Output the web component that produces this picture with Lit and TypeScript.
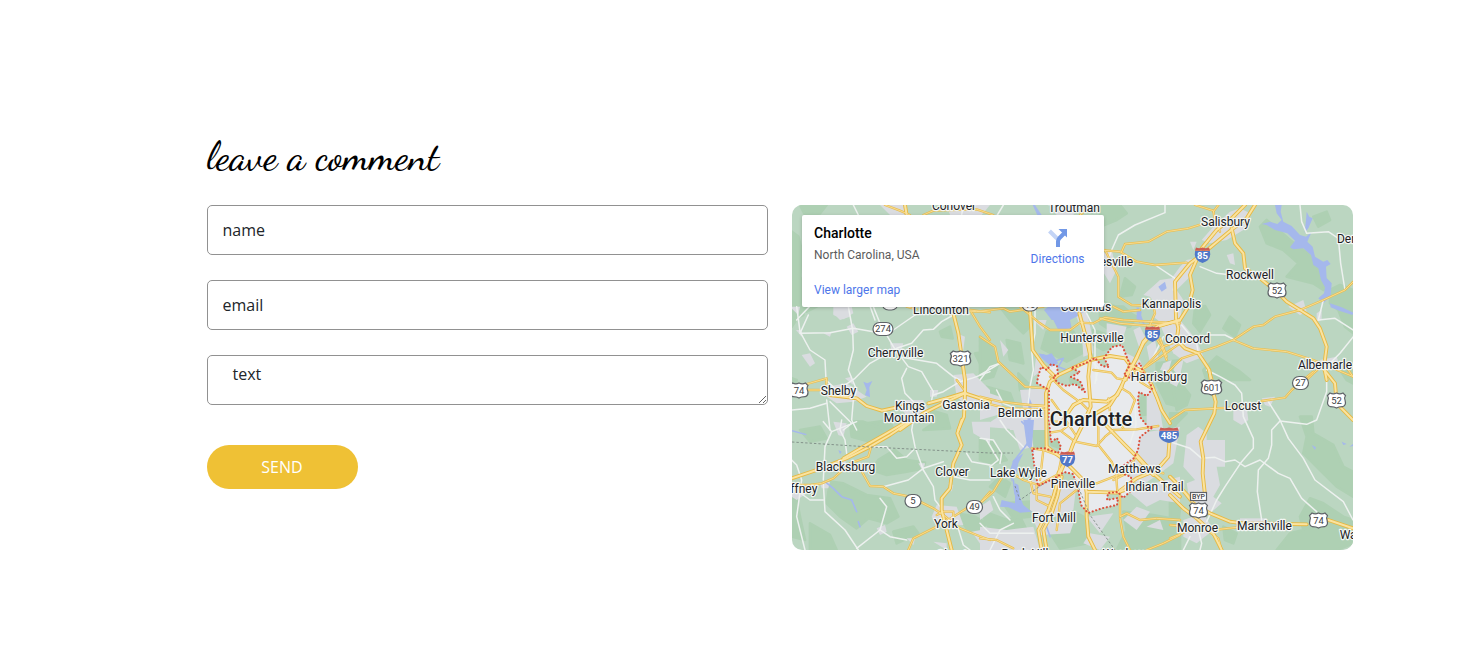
import { LitElement, html, svg, css } from "lit";
import { customElement } from "lit/decorators.js";

// Each survey sheet stores its geometry at three units per screen pixel.
interface Sheet {
  x: number;
  y: number;
  forest?: string[];
  urban?: string[];
  lake?: string[];
  river?: string[];
  local?: string[];
  road?: string[];
  highway?: string[];
}

const SHEETS: Sheet[] = [
  {
    x: 790, y: 200,
    forest: ["5,95 25,110 35,150 30,230 5,240", "30,15 110,15 90,40 45,45", "5,215 40,240 40,345 5,360"],
    urban: ["270,15 340,15 345,45 300,45", "140,318 185,318 180,350 150,360 130,340", "470,15 600,15 575,45 480,45", "0,320 30,320 25,345", "780,15 870,15 850,45 800,45"],
    lake: ["735,15 755,45 742,45 728,15", "775,320 850,320 845,345 825,360 785,360 762,330"],
    local: ["190,15 205,45", "240,318 255,360", "640,15 622,45", "60,318 20,360", "520,15 515,45"],
    road: ["285,15 330,32 360,45", "400,45 430,32 560,28 610,45", "870,45 905,15", "490,330 560,335 640,325 660,335 760,320"],
    highway: ["345,15 350,45"],
  },
  {
    x: 1100, y: 200,
    forest: [
      "480,80 500,60 530,85 570,120 610,150 650,180 655,215 690,250 670,270 640,250 560,230 595,190 550,150 500,130", "690,270 720,255 760,270 760,400 735,380 715,330 690,310",
      "640,50 680,35 690,60 655,80", "285,325 315,318 330,345 300,395 280,370", "0,80 50,60 80,40 60,15 0,15", "0,300 70,330 110,350 90,380 30,390 0,370",
      "390,350 420,375 405,410 370,385", "310,510 350,470 420,515 450,540 320,540", "75,235 105,260 95,285 60,290",
    ],
    urban: [
      "390,35 420,25 450,40 430,90 380,120 330,130 305,120 340,80", "260,180 285,175 270,230 230,270 250,300 240,360 200,380 160,350 165,310 150,290 130,285 180,240 215,235 240,200",
      "170,350 240,360 290,420 310,470 260,490 220,460 200,420", "0,165 35,150 50,210 30,250 0,200", "380,165 400,160 405,195 390,190", "565,320 610,300 620,335 600,345",
      "240,375 280,415 265,425 230,390", "650,340 665,330 665,360 650,365", "140,440 165,420 175,470 150,490", "660,480 710,470 720,500 670,510", "230,490 250,480 240,530 220,510", "270,125 290,125 280,150", "190,490 215,480 205,515 180,510",
    ],
    lake: [
      "525,15 545,15 542,35 550,65 575,78 600,105 618,110 635,95 622,125 638,140 645,170 670,185 682,180 692,192 678,200 680,235 695,250 692,288 670,310 655,295 672,280 675,262 663,240 655,205 640,195 633,165 610,145 580,148 570,142 585,122 562,100 525,90 500,75 485,72 510,65 532,72 545,60 530,40",
      "620,35 628,50 638,55 625,85 614,98 618,60", "115,320 125,350 135,375 110,355", "175,260 195,245 200,265 185,275", "690,310 725,322 760,338 757,345 720,333 692,322",
    ],
    local: [
      "195,15 195,38 105,75 55,105 35,150 20,190", "165,195 225,235 220,270", "300,200 350,220 440,230", "600,15 605,65 620,100 685,95 715,115 722,190 735,270",
      "670,300 655,360 705,355 760,390", "330,405 375,405 405,420", "245,375 290,430 295,460", "760,410 720,460 690,490", "190,410 150,490",
    ],
    road: [
      "0,150 60,155 110,185 165,195 260,188", "65,155 75,132 145,125 200,95 265,85 345,60", "285,15 340,32 345,65 360,95", "15,150 35,190 55,230 55,290 95,315 160,318 165,340 150,375",
      "0,355 60,370 140,377 240,365", "160,400 185,440 200,480", "230,425 190,440 150,485 125,510", "760,245 735,270 670,300 600,330 525,350 490,375 460,380 400,420 350,440 290,460 245,475 205,515",
      "400,420 460,445 560,455 640,480 675,495 760,530", "675,490 640,520 620,540", "355,15 340,35",
    ],
    highway: [
      "465,15 440,55 400,85 310,160 270,190 225,245 228,355 235,385 230,420 255,445 295,460 325,505 335,540", "435,15 395,55 350,90 305,145 270,225 278,270 265,320 240,360 175,378 130,430 100,490 75,540",
      "395,85 405,130 430,160 435,205 480,235 530,275 560,305 600,330 640,355 660,385 680,440 672,500 680,540",
    ],
  },
  {
    x: 790, y: 300,
    forest: ["5,20 30,20 15,65 5,80", "450,95 480,80 488,115 455,110", "380,335 420,330 470,345 480,385 400,390 430,370", "5,235 20,240 15,260 5,260", "230,370 300,360 310,390 230,390", "555,160 600,155 600,200 570,190", "30,20 80,20 50,35"],
    urban: ["130,20 185,20 190,40 160,58 130,45", "170,80 190,70 205,95 185,105", "35,165 60,160 75,190 60,200", "110,260 170,250 230,290 190,305 140,310 110,290", "100,100 125,95 120,110", "460,20 535,20 540,45 490,45", "490,225 550,220 600,270 600,330 540,325 500,290", "420,270 445,270 440,290 420,290", "320,300 400,300 420,340 350,350", "500,100 525,110 520,150 505,150", "300,130 340,130 330,165 305,155", "165,235 185,230 190,255", "18,90 35,90 35,110"],
    lake: ["220,245 232,250 247,243 238,262 240,292 225,285 230,270"],
    local: [
      "20,20 30,95 60,150 105,180 108,240", "55,45 30,100 120,98 190,85 250,95", "175,20 188,90 190,150 175,210 200,270 190,300 185,360 200,390", "250,20 270,70 310,140 355,200 395,215 430,275 425,300",
      "490,45 455,65 430,88 400,90 365,130 320,145 240,190 195,235 150,265", "335,172 440,190 490,230 510,240", "350,205 335,235 345,280 375,310", "600,215 545,235 510,245 460,275 430,285",
      "5,330 60,325 110,310", "310,90 375,45 410,25", "110,300 120,390", "120,305 185,370 160,390", "108,240 140,270",
    ],
    road: ["108,265 110,235 30,258", "50,270 95,270", "540,30 600,37", "545,38 570,80 600,120", "500,240 530,280", "350,20 380,28"],
    highway: ["490,40 505,100 515,170 525,240 525,280 522,350 505,390", "330,390 400,340 470,305 525,280 600,305", "415,310 470,295 525,278", "120,285 200,295 230,318 275,332 330,320 400,320"],
  },
  {
    x: 980, y: 300,
    forest: ["0,110 35,140 55,190 40,230 0,240", "60,20 150,20 145,50 155,75 130,100 90,60", "80,120 120,130 130,190 90,180", "200,95 280,95 315,155 260,185 185,145", "340,90 400,110 410,135 370,150 335,130", "350,20 430,20 470,55 390,45", "530,190 600,180 600,320 560,310 530,250", "20,260 90,280 100,305 40,295", "115,220 145,250 140,290 120,270"],
    urban: ["285,40 320,35 335,100 340,160 310,170 305,90", "160,60 200,60 190,90", "170,160 200,200 160,230", "0,270 60,290 70,340 0,360", "120,270 200,265 200,390 90,390 80,340 130,330", "380,70 440,80 430,110 380,110", "420,150 480,180 500,230 460,280 430,220", "500,240 530,270 550,390 500,390", "560,40 600,40 600,65 540,75", "460,90 480,80 500,120 480,150", "60,120 85,150 70,170", "10,380 70,340 140,350 130,390"],
    lake: ["200,35 235,20 315,30 300,45 270,60 275,85 235,90 220,60", "470,20 485,35 480,70 470,60", "215,160 235,190 215,200 185,175 175,160 200,165", "145,285 155,310 150,390 140,390 145,330"],
    river: ["190,165 220,185 250,175 235,200 260,210"],
    local: ["165,30 165,100 155,150 160,210 150,260 145,310", "320,40 345,90 345,190 350,240", "60,190 0,225", "0,240 30,200 60,190", "50,270 70,310 120,330"],
    road: [
      "120,20 180,70 210,90 270,90 300,68 340,70 375,52 430,60 600,70", "0,110 45,140 55,185 135,260 200,265", "0,290 60,305 120,312 200,320", "0,305 80,325 200,328",
      "400,20 430,35 480,30", "600,130 550,165 500,200 460,220", "460,205 480,245 520,270 545,330", "540,115 560,170",
    ],
    highway: [
      "298,40 320,120 332,170", "150,30 158,150 190,195 220,225", "600,60 530,80 490,125 470,175 445,220",
      "450,195 490,215 515,255 530,290 545,330 570,370",
    ],
  },
  {
    x: 790, y: 420,
    forest: ["265,120 315,90 350,120 405,128 400,145 350,155 290,165 245,150", "120,185 160,190 230,225 300,235 325,290 290,310 235,295 200,325 150,290 110,250", "30,30 90,20 110,55 60,65", "5,215 20,240 30,290 45,360 5,350", "180,5 220,5 290,30 240,65 185,50", "500,280 555,290 590,310 560,340 530,325", "60,310 120,345 140,390 60,390", "310,335 370,320 385,340 320,370"],
    urban: ["5,200 40,190 50,220 20,240 5,230", "130,5 170,10 160,50 145,45", "90,190 120,185 115,205 95,205", "260,325 285,315 290,335 270,345", "440,255 500,260 520,315 440,320 425,290", "350,355 375,355 370,375", "545,5 600,5 600,70 550,40", "385,130 405,130 400,155", "475,190 490,195 485,215", "150,120 170,125 160,140", "545,335 600,325 600,390 580,385", "430,365 470,370 470,390"],
    lake: ["5,30 50,42 48,46 5,34", "145,90 155,95 150,103"],
    river: ["105,185 130,205 155,230 185,240", "185,240 200,275", "205,305 210,320"],
    local: [
      "155,0 150,30 165,60 170,100", "5,120 20,135 35,180 20,290 45,390", "370,0 365,30 375,80 400,150 430,200 435,240 450,260", "240,80 290,80 320,115 350,110 370,90", "280,200 355,180 400,145 460,125",
      "100,190 105,275 165,330 205,390", "270,235 290,260 270,330 200,385", "270,330 300,350 350,360", "100,5 125,35 105,80 100,180", "490,170 540,180 600,180", "125,35 200,5", "5,200 60,240 100,240", "500,310 520,375 540,390", "530,100 545,125 600,135",
    ],
    road: ["210,145 240,198 280,200 310,220 360,230 430,265 460,285 510,325 560,345 600,360", "355,390 370,355 440,320 490,290 530,265 570,250 600,215", "5,195 60,195 95,190 130,175 180,130 235,110 242,85", "440,285 460,275 490,275 490,300"],
    highway: ["360,5 300,45 240,80 170,115 80,150 5,175", "350,5 290,40 220,80 160,115", "515,0 502,40 515,75 490,130 480,205 455,235 455,270 470,330 485,390"],
  },
  {
    x: 980, y: 420,
    forest: ["150,0 195,0 200,80 150,80", "0,30 50,80 80,120 40,130 0,120", "70,250 150,245 150,290 100,295", "215,240 310,290 320,370 240,385 205,330", "430,275 520,285 600,300 600,390 410,390 440,330", "60,170 90,190 75,230 30,200", "0,270 80,300 120,290 140,330 30,330"],
    urban: ["0,320 80,330 160,320 180,390 0,390", "480,40 600,20 580,130 540,160 480,200 460,180 440,150", "150,180 290,190 280,270 200,300 150,270", "90,0 150,0 160,80 120,90", "440,210 600,170 600,250 540,240 500,260", "0,260 30,240 40,270 0,300", "320,290 400,280 360,340", "430,300 470,260 510,275 470,330", "160,300 280,310 270,340 180,345", "330,340 390,350 360,390 310,370", "500,320 540,300 550,330"],
    lake: ["130,0 162,0 155,90 140,75", "100,120 130,100 115,130 110,160 95,185 90,150", "105,190 115,195 120,230 130,255 155,275 120,278 85,262 60,260 65,240 105,250"],
    river: ["125,5 150,30 145,75 160,95", "150,60 120,100 100,125", "100,180 105,220 120,260", "200,320 210,350"],
    local: ["0,55 40,60 65,100 60,130", "60,0 80,30 130,80", "40,230 60,270 90,300", "0,310 30,340 160,340", "20,60 55,120 30,140", "100,310 60,330 30,390"],
    road: [
      "0,250 40,215 80,150 130,180 175,195 230,165", "0,355 50,360 100,385", "420,210 420,290 440,280 480,300 530,295 600,300", "480,140 550,160",
      "170,195 170,240 210,260 200,300", "500,390 550,370 600,345", "290,210 240,250 230,330", "420,295 430,350 450,390", "150,180 160,220 210,230",
    ],
    highway: [
      "262,110 240,160 220,230 205,270 175,330 185,390", "245,170 232,230 215,280 190,330 200,390", "420,212 470,175 530,150 565,110 570,40", "470,105 520,160 600,230",
      "320,215 320,290 325,350 345,390",
    ],
  },
  {
    x: 1030, y: 340,
    forest: ["60,290 75,285 92,325 65,315", "350,150 380,170 380,220 335,225 330,180", "120,115 155,105 150,130 125,135"],
    local: ["185,60 205,85 195,130", "315,180 318,255 300,310"],
    road: [
      "60,110 100,150 155,190 180,215", "0,195 50,198", "65,180 90,215", "190,90 245,98 260,115 290,120", "60,278 95,272 130,245", "95,275 135,305 200,318 225,290 250,270 320,268 385,258",
      "205,310 205,260 190,240", "205,315 245,365 258,400 262,455", "135,430 200,430 290,395", "5,325 40,330 95,350 85,400", "30,420 40,330", "120,210 150,180", "275,145 300,160 315,180 300,220",
      "235,175 240,215 280,265", "60,245 110,245 140,290", "320,345 290,400 250,420",
    ],
    highway: [
      "178,0 180,60 175,110 182,200 160,250 130,310 115,350 85,400", "50,330 48,160 60,125 85,105 180,60 240,48 285,55 300,75 285,115 262,165 230,185 160,180 130,195 100,240",
      "275,140 240,195 190,225", "50,320 90,350 120,380 160,420 170,455 260,458 300,445", "230,258 285,315 320,350 370,405",
    ],
  },
  {
    x: 1170, y: 370,
    forest: ["390,140 425,140 430,190 490,225 520,290 549,305 549,380 500,350 450,300 400,250 410,200", "420,385 460,400 520,440 549,450 549,520 500,540 320,540 360,490 400,480 390,440", "10,60 40,50 60,75 50,105 20,120", "0,130 50,130 20,160 0,190", "0,390 30,410 25,460 0,460", "160,470 200,490 190,520 165,510", "549,0 510,0 530,30 549,40"],
    urban: ["50,195 85,170 110,190 110,210 165,210 165,290 140,290 150,345 130,380 155,400 120,430 60,400 50,340 75,330 40,290", "190,120 230,110 235,150 215,165 190,150", "275,85 315,80 300,110 285,105", "40,450 100,430 130,480 80,520 40,500", "0,0 30,30 20,50 0,40", "210,445 290,445 290,465 210,465"],
    lake: ["425,225 438,232 435,240", "515,215 530,222 520,225", "538,230 549,222 549,228"],
    local: [
      "110,0 150,20 195,45 215,70 220,140 250,205 250,235 215,275 165,350 140,390 110,455", "0,215 60,235 95,265 135,262 165,275 195,270 225,290 270,270 325,310 360,325 395,385 440,425",
      "295,95 330,150 355,205 400,265 435,330 520,395 549,450", "330,153 305,180 305,225 295,265 265,300 262,365 275,450", "470,0 470,65 440,150 410,163 330,153", "100,460 140,510", "85,480 95,520 90,540", "60,500 40,540",
    ],
    road: ["0,150 45,120 135,115 240,110", "275,93 345,83 365,60 430,5", "0,505 60,480 130,480 200,472", "110,480 145,505 155,540", "535,0 549,20", "0,465 30,468", "20,340 60,380"],
    highway: ["118,0 125,50 137,95 133,130 92,215 100,265 98,310 105,375", "463,0 495,40 500,100 549,150", "0,375 40,415 80,445 130,490 155,540", "0,320 30,350 70,400 120,430 180,455 220,460 410,463", "475,450 549,475"],
  },
];

const CITY =
  "1037,383 1038,377 1041,367 1047,370 1051,364 1057,366 1058,374 1053,377 1058,383 1067,386 1075,384 1085,392 1080,381 1071,377 1080,372 1071,368 1086,363 1095,358 1102,366 1109,367 1104,358 1112,347 1122,345 1126,355 1130,365 1124,375 1130,378 1136,366 1140,363 1143,372 1150,382 1152,389 1147,396 1139,392 1138,400 1140,417 1148,427 1153,427 1140,437 1138,450 1134,458 1123,466 1124,474 1131,477 1132,490 1123,498 1118,492 1108,493 1107,500 1118,498 1117,505 1103,508 1088,513 1081,505 1078,488 1073,474 1064,472 1055,478 1038,486 1035,470 1032,449 1044,448 1058,453 1061,447 1057,438 1051,442 1049,420 1049,390";

const BORDERS = ["792,442 870,447 990,453 1013,453", "1015,486 1020,500 1046,482", "1077,484 1090,515 1115,550"];

const TOWNS: [string, number, number][] = [
  ["Conover", 954, 209.5], ["Troutman", 1074, 211.5], ["Salisbury", 1225.5, 225.5], ["Denton", 1356, 242.5], ["esville", 1116.5, 265.5],
  ["Rockwell", 1250, 278.5], ["Kannapolis", 1171.5, 307.5], ["Lincolnton", 941, 313.5], ["Cornelius", 1086, 310.5], ["Huntersville", 1092, 341.5],
  ["Concord", 1187.5, 342.5], ["Cherryville", 895.5, 356.5], ["Albemarle", 1325, 368.5], ["Harrisburg", 1159, 380.5], ["Shelby", 838.5, 394.5],
  ["Kings", 910, 409.5], ["Mountain", 909, 421.5], ["Gastonia", 966, 408.5], ["Belmont", 1020, 416.5], ["Locust", 1243, 409.5],
  ["Blacksburg", 845.5, 470.5], ["Clover", 952, 475.5], ["Lake Wylie", 1018.5, 476.5], ["Matthews", 1134.5, 472.5], ["Pineville", 1073, 487.5],
  ["Indian Trail", 1154.5, 490.5], ["Gaffney", 796.5, 492.5], ["Fort Mill", 1054, 521.5], ["York", 946, 527.5], ["Monroe", 1197.5, 531.5],
  ["Marshville", 1264.5, 529.5], ["Wadesboro", 1370, 538.5], ["Rock Hill", 1025, 557.5], ["Waxhaw", 1125, 557.5], ["Chester", 957, 558.5],
];

const OVALS: [string, number, number][] = [
  ["274", 883, 329], ["27", 1300.5, 383], ["5", 913, 501], ["49", 974.5, 507], ["16", 1030, 304.5], ["18", 890, 303.5],
];
const US: [string, number, number][] = [
  ["52", 1277, 290.5], ["321", 960.5, 358.5], ["74", 799, 390.5], ["601", 1211.5, 387.5], ["52", 1336.5, 400.5], ["74", 1198.5, 510.5], ["74", 1318.5, 520.5],
];
const INTERSTATES: [string, number, number][] = [
  ["85", 1202.5, 255], ["85", 1152.5, 334], ["77", 1067.5, 459], ["485", 1169, 435],
];

const layer = (cls: string, pick: (s: Sheet) => string[] | undefined, area = false) => SHEETS.map(
  (s) => svg`<g class=${cls} transform="translate(${s.x} ${s.y}) scale(0.33333)">${(pick(s) ?? []).map((p) =>
    area ? svg`<polygon points=${p}></polygon>` : svg`<polyline points=${p}></polyline>`)}</g>`,
);

@customElement("area-map")
export class AreaMap extends LitElement {
  static styles = css`
    :host { display: block; position: relative; height: 345px; border-radius: 10px; overflow: hidden; background: #bbd6c1; }
    .map { display: block; width: 100%; height: 100%; font-family: Roboto, sans-serif; }
    .forest { fill: #aed0b3; stroke: #aed0b3; stroke-width: 8; stroke-linejoin: round; }
    .urban { fill: #dadce0; }
    .lake { fill: #a5b8ec; }
    .river, .local, .casing, .core, .hw-casing, .hw-core { fill: none; stroke-linejoin: round; stroke-linecap: round; }
    .river { stroke: #a5b8ec; stroke-width: 5; }
    .local { stroke: #edf1ef; stroke-width: 4.5; }
    .casing { stroke: #e8bf52; stroke-width: 7; }
    .core { stroke: #fae09a; stroke-width: 2.6; }
    .hw-casing { stroke: #e6b944; stroke-width: 11.5; }
    .hw-core { stroke: #fae3a0; stroke-width: 6; }
    .city { fill: #e8eaed; }
    .limit { fill: none; stroke: #dc4f3b; stroke-width: 2.1; stroke-dasharray: 0.1 3.6; stroke-linecap: round; }
    .border { fill: none; stroke: #7d8a83; stroke-width: 0.9; stroke-dasharray: 2.4 2; }
    .town { font-size: 12px; fill: #202124; stroke: #f3f6f4; stroke-width: 2.4; stroke-linejoin: round; paint-order: stroke; text-anchor: middle; }
    .capital { font-size: 20px; font-weight: 500; }
    .sign { font-size: 9.5px; font-weight: 400; fill: #3c4043; text-anchor: middle; }
    .sign.small { font-size: 7px; font-weight: 500; }
    .plate { fill: #fff; stroke: #5f6368; stroke-width: 1.2; }
    .blue { fill: #5078c8; }
    .red { fill: #cb5c53; }
    .sign.white { fill: #fff; font-weight: 700; }
    .card { position: absolute; left: 10px; top: 10px; width: 302px; height: 92px; box-sizing: border-box; padding: 9px 19.5px 0 12px; display: flex; justify-content: space-between; background: #fff; border-radius: 2px; box-shadow: 0 1px 4px -1px rgba(0, 0, 0, 0.3); font: 12px/16px Roboto, sans-serif; }
    .title { font-size: 14px; font-weight: 500; line-height: 18px; color: #000; }
    .place { margin-top: 5px; color: #5b5b5b; }
    .link { color: #4d76ea; }
    .larger { margin-top: 19px; }
    .directions { display: flex; flex-direction: column; align-items: center; padding-top: 3px; }
    .arrow { display: block; width: 22px; height: 22px; margin-bottom: 2px; }
  `;

  render() {
    return html`
      <svg class="map" viewBox="792 205 561 345">
        ${layer("forest", (s) => s.forest, true)}
        ${layer("urban", (s) => s.urban, true)}
        <polygon class="city" points=${CITY}></polygon>
        ${layer("lake", (s) => s.lake, true)}
        ${layer("river", (s) => s.river)}
        ${layer("local", (s) => s.local)}
        ${layer("casing", (s) => s.road)}
        ${layer("hw-casing", (s) => s.highway)}
        ${layer("core", (s) => s.road)}
        ${layer("hw-core", (s) => s.highway)}
        ${BORDERS.map((p) => svg`<polyline class="border" points=${p}></polyline>`)}
        <polygon class="limit" points=${CITY}></polygon>
        ${OVALS.map(([n, x, y]) => svg`<g transform="translate(${x} ${y})">
          <rect class="plate" x=${n.length > 2 ? -10 : -8} y="-6.5" width=${n.length > 2 ? 20 : 16} height="13" rx="6.5"></rect>
          <text class="sign" y="3.4">${n}</text></g>`)}
        ${US.map(([n, x, y]) => svg`<g transform="translate(${x} ${y})">
          <path class="plate" transform=${n.length > 2 ? "scale(1.13 1)" : "scale(1)"} d="M-6.5-7.5Q-3.3-5.8 0-7.5Q3.3-5.8 6.5-7.5L9-5Q7.3-2.5 8.6 0Q10 5 6 6.2Q2 6.2 0 7.6Q-2 6.2-6 6.2Q-10 5-8.6 0Q-7.3-2.5-9-5Z"></path>
          <text class="sign" y="3.2">${n}</text></g>`)}
        ${INTERSTATES.map(([n, x, y]) => svg`<g transform="translate(${x} ${y})">
          <g transform=${n.length > 2 ? "scale(1.3 1)" : "scale(1)"}>
            <path class="blue" d="M-7.3-4H7.3Q9.5 5 0 8Q-9.5 5-7.3-4Z"></path>
            <path class="red" d="M-6.5-7.5Q-3.3-6 0-7.5Q3.3-6 6.5-7.5L7.6-4.3H-7.6Z"></path>
          </g>
          <text class="sign white" y="4.2">${n}</text></g>`)}
        <rect class="plate" x="1190.5" y="492.5" width="16" height="8"></rect>
        <text class="sign small" x="1198.5" y="499">BYP</text>
        ${TOWNS.map(([n, x, y]) => svg`<text class="town" x=${x} y=${y}>${n}</text>`)}
        <text class="town capital" x="1091" y="426">Charlotte</text>
      </svg>
      <div class="card">
        <div>
          <div class="title">Charlotte</div>
          <div class="place">North Carolina, USA</div>
          <div class="link larger">View larger map</div>
        </div>
        <div class="directions">
          <svg class="arrow" viewBox="0 0 22 22">
            <path d="M2.5 4L10 11.5" fill="none" stroke="#c3d4f6" stroke-width="4"></path>
            <path d="M11 20V14.5Q11 12.5 12.5 11L17 6.5" fill="none" stroke="#7298e6" stroke-width="4"></path>
            <path d="M11.5 2H20V10.5Z" fill="#7298e6"></path>
          </svg>
          <div class="link">Directions</div>
        </div>
      </div>
    `;
  }
}

@customElement("app-root")
export class AppRoot extends LitElement {
  static styles = css`
    :host { display: block; box-sizing: border-box; height: 648px; padding: 129px 125px 0 207px; background: #fff; font-family: "Open Sans", sans-serif; overflow: hidden; }
    .heading { margin: 0; height: 76px; font: 500 40px/54px "Dancing Script", cursive; color: #000; white-space: nowrap; }
    .columns { display: grid; grid-template-columns: 1fr 1fr; column-gap: 24px; align-items: start; }
    .form { display: flex; flex-direction: column; gap: 25px; }
    .field { display: block; box-sizing: border-box; width: 100%; height: 50px; margin: 0; padding: 0 14.5px; border: 1px solid #919191; border-radius: 5px; outline: 0; background: #fff; font: 400 16px/24px "Open Sans", sans-serif; color: #212529; }
    .field::placeholder { color: #212529; opacity: 1; }
    .area { padding: 6px 24.5px; resize: vertical; overflow: hidden; }
    .send { align-self: flex-start; width: 151px; height: 44px; margin-top: 15px; padding: 0 1px 0 0; border: 0; border-radius: 22px; background: #efc135; color: #fff; font: 400 16px/24px "Open Sans", sans-serif; }
  `;

  render() {
    return html`
      <h2 class="heading">leave a comment</h2>
      <div class="columns">
        <form class="form">
          <input class="field" type="text" placeholder="name" />
          <input class="field" type="email" placeholder="email" />
          <textarea class="field area" placeholder="text"></textarea>
          <button class="send" type="button">SEND</button>
        </form>
        <area-map></area-map>
      </div>
    `;
  }
}
